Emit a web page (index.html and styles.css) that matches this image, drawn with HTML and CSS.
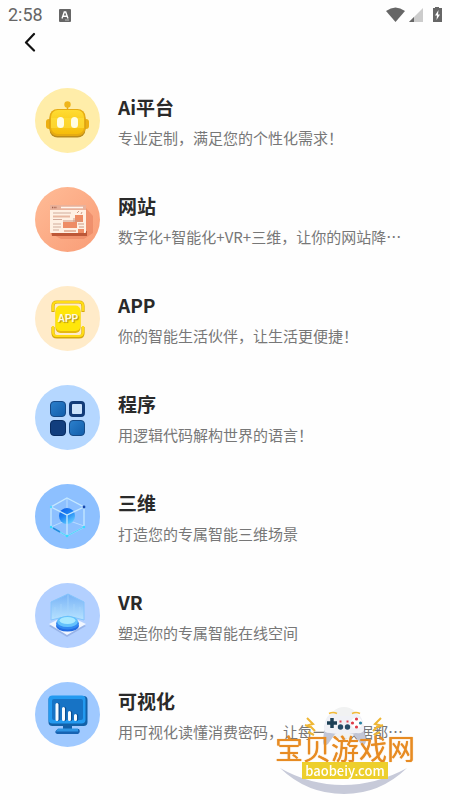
FILE: index.html
```
<!DOCTYPE html>
<html lang="zh-CN">
<head>
  <meta charset="UTF-8" />
  <meta name="viewport" content="width=device-width, initial-scale=1.0"/>
  <title>服务列表</title>
  <link rel="stylesheet" href="styles.css">
</head>
<body>

<div class="status-bar">
  <span class="time">2:58</span>
  <svg class="status-app" width="12" height="13" viewBox="0 0 12 13">
    <rect width="12" height="13" rx="1" fill="#666"/>
    <path d="M3 9.500L5.300 3h1.400L9 9.500M4 7.300h4" fill="none" stroke="#fff" stroke-width="1.400"/>
    <path d="M6 11h4" stroke="#bbb" stroke-width="1"/>
  </svg>
  <svg class="status-icons" width="56" height="18" viewBox="0 0 56 18">
    <path d="M0 5Q9.500-2 19 5L9.500 16z" fill="#666"/>
    <path d="M37 2v14H23z" fill="#ccc"/>
    <path d="M28 11v5h-5z" fill="#666"/>
    <path d="M49 1h4v1h3v14h-9V2h2z" fill="#666"/>
    <path d="M52.500 4L49 9.500h2L50.500 14 54 8.500h-2z" fill="#fff"/>
  </svg>
</div>

<header>
  <button class="back" type="button" aria-label="返回">
    <svg width="12" height="20" viewBox="0 0 12 20"><path d="M10 2L2 10.500l8 8" fill="none" stroke="#111" stroke-width="2.200" stroke-linecap="round" stroke-linejoin="round"/></svg>
  </button>
</header>

<main class="service-list">
  <a class="service" href="#ai">
    <svg class="icon" viewBox="0 0 65 65">
      <defs>
        <linearGradient id="gold" x1="0" y1="0" x2="0" y2="1"><stop offset="0" stop-color="#ffdc32"/><stop offset="1" stop-color="#f6bd0b"/></linearGradient>
      </defs>
      <circle cx="32.500" cy="32.500" r="32.500" fill="#ffeda9"/>
      <path d="M32.500 17v6" stroke="#e3a914" stroke-width="1.500"/>
      <circle cx="32.500" cy="16.500" r="3.200" fill="#efb51b"/>
      <rect x="11" y="31" width="6" height="10" rx="3" fill="#edaf12"/>
      <rect x="48" y="31" width="6" height="10" rx="3" fill="#edaf12"/>
      <rect x="14.500" y="22.500" width="36" height="27" rx="8" fill="#b98b1c"/>
      <rect x="14.500" y="21" width="36" height="27" rx="8" fill="#e6ab12"/>
      <rect x="16" y="22" width="33" height="24" rx="7" fill="url(#gold)"/>
      <path d="M16 30h33v10H16z" fill="#ffe03e" opacity=".6"/>
      <rect x="22" y="29" width="7" height="11" rx="3.500" fill="#fffde3"/>
      <rect x="36" y="29" width="7" height="11" rx="3.500" fill="#fffde3"/>
    </svg>
    <div class="info">
      <h2>Ai平台</h2>
      <p>专业定制，满足您的个性化需求！</p>
    </div>
  </a>

  <a class="service" href="#website">
    <svg class="icon" viewBox="0 0 65 65">
      <defs>
        <linearGradient id="peach" x1="0" y1="0" x2="1" y2="1"><stop offset="0" stop-color="#ffbc97"/><stop offset="1" stop-color="#f99c76"/></linearGradient>
      </defs>
      <circle cx="32.500" cy="32.500" r="32.500" fill="url(#peach)"/>
      <path d="M51 21l7 8v17l-9 6H26l-9-5z" fill="#de714f" opacity=".4"/>
      <path d="M16 44h36v5H17z" fill="#bd5737"/>
      <rect x="15" y="18" width="36" height="28" rx="1" fill="#fff0e3"/>
      <path d="M15 18h36v5H15z" fill="#e9b19a"/>
      <path d="M17 20.500h5" stroke="#a2614d" stroke-width="1.300" stroke-dasharray="1.300 1"/>
      <path d="M26 20.500h22" stroke="#fff5ed" stroke-width="1.500"/>
      <path d="M18 26h18M18 32.500h9M18 37h8M18 40h8M18 43h6" stroke="#d2ab9c" stroke-width="1.200"/>
      <path d="M18 29.500h17M29 44h12" stroke="#e8b8a1" stroke-width="2"/>
      <path d="M28 35h14v6H28z" fill="#ee8c65"/>
      <path d="M40 28h8v7h-8zM43 42h6v4h-6z" fill="#ee8c65"/>
      <path d="M42 26l2-2M46 27l1-2M39 31v4M28 34h19M43 37h6M44 40h5" stroke="#cd9984" fill="none"/>
    </svg>
    <div class="info">
      <h2>网站</h2>
      <p>数字化+智能化+VR+三维，让你的网站降…</p>
    </div>
  </a>

  <a class="service" href="#app">
    <svg class="icon" viewBox="0 0 65 65">
      <circle cx="32.500" cy="32.500" r="32.500" fill="#ffebc9"/>
      <path d="M18 26v-6q0-4 4-4h22q4 0 4 4v6M18 41v6q0 4 4 4h22q4 0 4-4v-6" fill="none" stroke="#d7a90a" stroke-width="3.200"/>
      <path d="M18 25v-5q0-4 4-4h22q4 0 4 4v5M18 40v6q0 4 4 4h22q4 0 4-4v-6" fill="none" stroke="#ffdc16" stroke-width="2.200"/>
      <rect x="20.500" y="21" width="25" height="26" rx="5" fill="#e5b90d"/>
      <rect x="20.500" y="19.500" width="25" height="25.500" rx="5" fill="#ffe60b"/>
      <text class="app-mark" x="33" y="36" text-anchor="middle">APP</text>
    </svg>
    <div class="info">
      <h2>APP</h2>
      <p>你的智能生活伙伴，让生活更便捷！</p>
    </div>
  </a>

  <a class="service" href="#program">
    <svg class="icon" viewBox="0 0 65 65">
      <defs>
        <linearGradient id="tile" x1="0" y1="0" x2="1" y2="1"><stop offset="0" stop-color="#2c80cc"/><stop offset="1" stop-color="#115daa"/></linearGradient>
      </defs>
      <circle cx="32.500" cy="32.500" r="32.500" fill="#b5d7ff"/>
      <rect x="15.500" y="16.500" width="15" height="15" rx="3.500" fill="url(#tile)" stroke="#164a87"/>
      <rect x="35.500" y="17.500" width="13" height="13" rx="2.500" fill="#cbe2fb" stroke="#123b78" stroke-width="3"/>
      <rect x="15.500" y="35.500" width="15" height="15" rx="3.500" fill="#123e7e" stroke="#092c61"/>
      <rect x="34.500" y="35.500" width="15" height="15" rx="3.500" fill="url(#tile)" stroke="#164a87"/>
    </svg>
    <div class="info">
      <h2>程序</h2>
      <p>用逻辑代码解构世界的语言！</p>
    </div>
  </a>

  <a class="service" href="#three-d">
    <svg class="icon" viewBox="0 0 65 65">
      <defs>
        <linearGradient id="ball" x1="0" y1="0" x2=".6" y2="1"><stop offset="0" stop-color="#0c58e6"/><stop offset=".5" stop-color="#1e83f3"/><stop offset="1" stop-color="#5cc8ff"/></linearGradient>
      </defs>
      <circle cx="32.500" cy="32.500" r="32.500" fill="#8dc0ff"/>
      <path d="M32 14v22M32 36L16 43M32 36l17 6" stroke="#b9dcff" fill="none"/>
      <circle cx="32" cy="32" r="8" fill="url(#ball)"/>
      <path d="M32 14l17 9v20l-17 9-16-9V23zM16 23l16 8 17-8M32 31v21" fill="none" stroke="#c5e8ff" stroke-width="1.300"/>
      <path d="M16 43l16 9 17-9" fill="none" stroke="#5ad4fc" stroke-width="1.300"/>
      <path d="M18 44l7 4" stroke="#258bdf" stroke-width="1.500"/>
      <circle cx="49" cy="23" r="1.400" fill="#1546ac"/>
      <circle cx="16" cy="23" r="1.200" fill="#56d8ff"/>
      <circle cx="16" cy="43" r="1.200" fill="#35dbff"/>
      <circle cx="49" cy="43" r="1.200" fill="#35dbff"/>
      <circle cx="32" cy="52" r="1.300" fill="#35dbff"/>
    </svg>
    <div class="info">
      <h2>三维</h2>
      <p>打造您的专属智能三维场景</p>
    </div>
  </a>

  <a class="service" href="#vr">
    <svg class="icon" viewBox="0 0 65 65">
      <defs>
        <linearGradient id="glass" x1="0" y1="0" x2="0" y2="1"><stop offset="0" stop-color="#78b2f6"/><stop offset="1" stop-color="#b7e3ff"/></linearGradient>
      </defs>
      <circle cx="32.500" cy="32.500" r="32.500" fill="#b3d0ff"/>
      <path d="M14 43l18-9 19 9-19 11z" fill="#98b4e9"/>
      <path d="M14 41l18-9 19 9-19 11z" fill="#f1f6ff"/>
      <path d="M16 19l17-8 16 8v18l-16-4-17 4z" fill="url(#glass)" stroke="#84c4fc"/>
      <path d="M33 12v22M20 24v10M26 21v10M39 21v9M45 24v8" stroke="#a8d6fd" opacity=".7"/>
      <ellipse cx="32.500" cy="43" rx="11.500" ry="5.500" fill="#236ce2"/>
      <ellipse cx="32.500" cy="40.500" rx="11.500" ry="6" fill="#3389f1"/>
      <ellipse cx="32.500" cy="38.500" rx="10.500" ry="5.500" fill="#64c2fc"/>
      <ellipse cx="32.500" cy="37.500" rx="8" ry="3.500" fill="#a9e9ff"/>
    </svg>
    <div class="info">
      <h2>VR</h2>
      <p>塑造你的专属智能在线空间</p>
    </div>
  </a>

  <a class="service" href="#visual">
    <svg class="icon" viewBox="0 0 65 65">
      <circle cx="32.500" cy="32.500" r="32.500" fill="#9fc9ff"/>
      <path d="M28 42h9v6h-9z" fill="#1260a8"/>
      <path d="M23 47h21q2 3-1 5H22q-4-2 1-5z" fill="#1763b2"/>
      <path d="M23 46.500h20v3H21z" fill="#2f94e3"/>
      <rect x="13.500" y="14" width="39" height="30" rx="4" fill="#1261a8"/>
      <rect x="13.500" y="13.500" width="37" height="28" rx="4" fill="#239af0"/>
      <rect x="17" y="17" width="31" height="21" rx="2" fill="#1773c5"/>
      <path d="M23 22.500v15M29.500 26.500v11M35.500 30.500v7M41.500 33.500v4" stroke="#0c4f93" stroke-width="3.500" stroke-linecap="round"/>
      <path d="M22 22.500v15M28.500 26.500v11M34.500 30.500v7M40.500 33.500v4" stroke="#f6fbff" stroke-width="3" stroke-linecap="round"/>
    </svg>
    <div class="info">
      <h2>可视化</h2>
      <p>用可视化读懂消费密码，让每一个数据都…</p>
    </div>
  </a>
</main>

<!-- Site badge over the last row -->
<div class="badge">
  <svg class="badge-art" width="140" height="90" viewBox="0 0 140 90">
    <circle cx="69" cy="17" r="16" fill="#f1f2f2"/>
    <path d="M32 12l6 6-4 1 6 6M33 26l6 3M30 19l5 2M106 12l-6 6 4 1-6 6M105 26l-6 3M108 19l-5 2" fill="none" stroke="#efb634" stroke-width="2"/>
    <!-- gamepad -->
    <path d="M54 10q5-3 10 1h10q5-4 10-1 4 3 5 15l2 10q-1 6-5 3l-8-10H60l-7 10q-5 4-5-3l1-10q1-12 5-15z" fill="#c2c6d6"/>
    <path d="M54 9q5-3 10 1h10q5-4 10-1 4 3 5 14 0 5-8 4l-7 1H62l-7-1q-7 0-6-5 1-10 5-13z" fill="#f0f1f6"/>
    <path d="M54 7.500q4-2 8 0M77 7.500q4-2 8 0" stroke="#f2ba37" stroke-width="1.500" fill="none"/>
    <path d="M57 12v10M52 17h10" stroke="#1d4056" stroke-width="3.500"/>
    <circle cx="81.500" cy="17" r="5.500" fill="#fff"/>
    <circle cx="81.500" cy="13" r="1.600" fill="#df3b49"/><circle cx="81.500" cy="21" r="1.600" fill="#df3b49"/>
    <circle cx="77.500" cy="17" r="1.600" fill="#df3b49"/><circle cx="85.500" cy="17" r="1.600" fill="#2880a2"/>
    <circle cx="65.500" cy="21" r="2.700" fill="#254b66"/><circle cx="72.500" cy="21" r="2.700" fill="#254b66"/>
    <path d="M64.500 15.500h2M71.500 15.500h2" stroke="#dc4452" stroke-width="2"/>
    <path d="M5 62Q35 79 68 79T132 62Q105 88 69 88 32 88 5 62z" fill="#c7cad9"/>
  </svg>
  <strong class="badge-name">宝贝游戏网</strong>
  <span class="badge-url">baobeiy.com</span>
</div>

</body>
</html>
```
FILE: styles.css
```
* {
  box-sizing: border-box;
}

body {
  margin: 0;
  background: #fefefe;
  font-family: "Noto Sans CJK SC", sans-serif;
  color: #2a2a2a;
}

.status-bar {
  display: flex;
  align-items: center;
  height: 30px;
  padding: 0 8px;
}

.time {
  font-family: Roboto, sans-serif;
  font-size: 18px;
  line-height: 30px;
  color: #666;
}

.status-app {
  margin-left: 16px;
}

.status-icons {
  margin-left: auto;
}

header {
  display: flex;
  height: 58px;
  padding: 2px 24px;
}

.back {
  height: 20px;
  padding: 0;
  border: none;
  background: none;
  cursor: pointer;
}

.back svg {
  display: block;
}

.service-list {
  display: flex;
  flex-direction: column;
  gap: 34px;
  padding: 0 35px;
}

.service {
  display: flex;
  gap: 18px;
  color: inherit;
  text-decoration: none;
}

.icon {
  flex: none;
  width: 65px;
  height: 65px;
}

.info {
  min-width: 0;
  padding-top: 5px;
}

.info h2 {
  margin: 0;
  font-size: 19px;
  font-weight: bold;
  line-height: 28px;
}

.info p {
  margin: 6px 0 0;
  font-size: 15px;
  line-height: 22px;
  color: #777;
  white-space: nowrap;
}

.app-mark {
  font-family: "Liberation Sans", sans-serif;
  font-size: 10px;
  font-weight: bold;
  fill: #fffbe0;
  text-shadow: 1px 1px 1px #a98a14;
}

.badge {
  position: fixed;
  right: 35px;
  bottom: 4px;
  display: flex;
  flex-direction: column;
  align-items: center;
  width: 140px;
  height: 90px;
  padding-top: 28px;
}

.badge-art {
  position: absolute;
  top: 0;
  left: 0;
}

.badge-name {
  position: relative;
  font-size: 28px;
  font-weight: 400;
  line-height: 28px;
  color: #e78b22;
  white-space: nowrap;
  text-shadow: 0 0 1px #e78b22;
}

.badge-url {
  position: relative;
  width: 86px;
  background: #edcf2c;
  font-size: 13px;
  font-weight: 500;
  line-height: 17px;
  text-align: center;
  color: #fff;
}
```
